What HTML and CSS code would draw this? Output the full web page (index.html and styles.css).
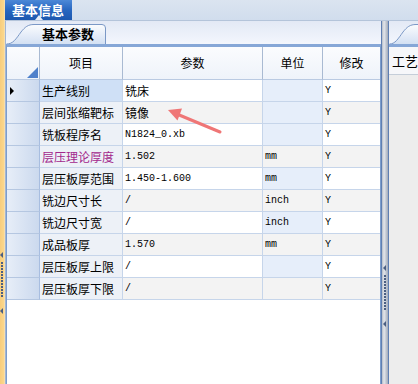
FILE: index.html
```html
<!DOCTYPE html>
<html lang="zh">
<head>
  <meta charset="UTF-8" />
  <title>基本信息</title>
  <link rel="stylesheet" href="styles.css">
</head>
<body>
  <div class="app">
    <div class="edge-left">
      <div class="grip">
        <span class="tri"></span>
        <span class="dots"></span>
        <span class="tri"></span>
      </div>
    </div>

    <div class="main">
      <div class="topbar">
        <div class="toptab">基本信息</div>
      </div>

      <div class="work">
        <div class="pane">
          <div class="tabstrip">
            <div class="tab">
              <svg class="tab-shape" width="100" height="23" viewBox="0 0 100 23">
                <defs>
                  <linearGradient id="tabFill" x1="0" y1="0" x2="0" y2="1">
                    <stop offset="0" stop-color="#fbfcfe" />
                    <stop offset="1" stop-color="#d3e0f3" />
                  </linearGradient>
                </defs>
                <path d="M0.5,23 C7,23 10,18 15,11 C19,6 22,3.5 28,3.5 L96,3.5 Q99.5,3.5 99.5,7 L99.5,23" fill="url(#tabFill)" stroke="#7b98c6" />
              </svg>
              <span>基本参数</span>
            </div>
          </div>

          <div class="grid">
            <div class="row head">
              <div class="rh corner"><span class="corner-tri"></span></div>
              <div>项目</div>
              <div>参数</div>
              <div>单位</div>
              <div>修改</div>
            </div>
            <div class="row sel">
              <div class="rh"><span class="cur"></span></div>
              <div class="name">生产线别</div>
              <div class="val">铣床</div>
              <div class="unit"></div>
              <div class="mod m">Y</div>
            </div>
            <div class="row alt">
              <div class="rh"></div>
              <div class="name">层间张缩靶标</div>
              <div class="val">镜像</div>
              <div class="unit ro"></div>
              <div class="mod m">Y</div>
            </div>
            <div class="row">
              <div class="rh"></div>
              <div class="name">铣板程序名</div>
              <div class="val m">N1824_0.xb</div>
              <div class="unit"></div>
              <div class="mod m">Y</div>
            </div>
            <div class="row alt">
              <div class="rh"></div>
              <div class="name hl">层压理论厚度</div>
              <div class="val m">1.502</div>
              <div class="unit m">mm</div>
              <div class="mod m">Y</div>
            </div>
            <div class="row">
              <div class="rh"></div>
              <div class="name">层压板厚范围</div>
              <div class="val m">1.450-1.600</div>
              <div class="unit m">mm</div>
              <div class="mod m">Y</div>
            </div>
            <div class="row alt">
              <div class="rh"></div>
              <div class="name">铣边尺寸长</div>
              <div class="val m">/</div>
              <div class="unit m">inch</div>
              <div class="mod m">Y</div>
            </div>
            <div class="row">
              <div class="rh"></div>
              <div class="name">铣边尺寸宽</div>
              <div class="val m">/</div>
              <div class="unit m">inch</div>
              <div class="mod m">Y</div>
            </div>
            <div class="row alt">
              <div class="rh"></div>
              <div class="name">成品板厚</div>
              <div class="val m">1.570</div>
              <div class="unit m">mm</div>
              <div class="mod m">Y</div>
            </div>
            <div class="row">
              <div class="rh"></div>
              <div class="name">层压板厚上限</div>
              <div class="val m">/</div>
              <div class="unit"></div>
              <div class="mod m">Y</div>
            </div>
            <div class="row alt">
              <div class="rh"></div>
              <div class="name">层压板厚下限</div>
              <div class="val m">/</div>
              <div class="unit"></div>
              <div class="mod m">Y</div>
            </div>
          </div>
        </div>

        <div class="splitter">
          <div class="grip">
            <span class="tri"></span>
            <span class="dots"></span>
            <span class="tri"></span>
          </div>
        </div>

        <div class="side">
          <div class="side-strip">
            <svg class="tab-shape" width="29" height="23" viewBox="0 0 29 23">
              <defs>
                <linearGradient id="tabFill2" x1="0" y1="0" x2="0" y2="1">
                  <stop offset="0" stop-color="#fbfcfe" />
                  <stop offset="1" stop-color="#d3e0f3" />
                </linearGradient>
              </defs>
              <path d="M0.5,23 C6,23 9,18 14,11 C18,6 21,3.5 27,3.5 L30,3.5 L30,23" fill="url(#tabFill2)" stroke="#7b98c6" />
            </svg>
          </div>
          <div class="side-head">工艺参数</div>
        </div>
      </div>
    </div>

    <!-- 标注箭头 -->
    <svg class="mark" width="418" height="384" viewBox="0 0 418 384">
      <line x1="220" y1="132" x2="178" y2="114.5" stroke="#ef7676" stroke-width="3" stroke-linecap="round" />
      <polygon points="168,110 182,108.5 177.5,120.5" fill="#ef7676" />
    </svg>
  </div>
</body>
</html>
```

FILE: styles.css
```css
* {
  box-sizing: border-box;
}
body {
  margin: 0;
  width: 418px;
  height: 384px;
  overflow: hidden;
  font-family: "Noto Sans CJK SC", sans-serif;
  font-size: 12px;
  color: #000;
  background: #fff;
}
.app {
  position: relative;
  display: flex;
  height: 384px;
}
.edge-left {
  width: 5px;
  flex-shrink: 0;
  background: linear-gradient(to right, #f7cd7c, #fbd68a 70%, #f6e3bb);
  padding-top: 252px;
}
.grip {
  display: flex;
  flex-direction: column;
  align-items: flex-start;
}
.grip .tri {
  width: 0;
  height: 0;
  border-top: 3px solid transparent;
  border-bottom: 3px solid transparent;
  border-right: 3px solid #4b5f82;
}
.grip .dots {
  width: 2px;
  height: 36px;
  margin: 4px 0 10px 1px;
  background: repeating-linear-gradient(#4b5f82 0 2px, transparent 2px 3px);
}

.main {
  flex: 1;
  display: flex;
  flex-direction: column;
}
.topbar {
  height: 21px;
  flex-shrink: 0;
  background: linear-gradient(#dbe4f0, #d1dded);
  border-bottom: 1px solid #b4c4da;
}
.toptab {
  position: relative;
  width: 67px;
  height: 20px;
  padding-left: 7px;
  background: linear-gradient(#4c88d7, #2766c0 50%, #1c57af);
  color: #fff;
  font-weight: bold;
  font-size: 13px;
  line-height: 19px;
}
.toptab::after {
  content: "";
  position: absolute;
  left: 30px;
  bottom: 0;
  border-left: 4px solid transparent;
  border-right: 4px solid transparent;
  border-bottom: 5px solid #e6ecf7;
}

.work {
  flex: 1;
  display: flex;
  min-height: 0;
}
.pane {
  width: 376px;
  flex-shrink: 0;
  border-left: 1px solid #a3b6d3;
  display: flex;
  flex-direction: column;
}
.tabstrip {
  height: 23px;
  flex-shrink: 0;
  background: linear-gradient(#e3e9f5, #f3f6fd);
}
.tab {
  position: relative;
  width: 100px;
  height: 23px;
  padding: 3px 0 0 36px;
  font-weight: bold;
  font-size: 13px;
  line-height: 20px;
}
.tab-shape {
  position: absolute;
  left: 0;
  top: 0;
}
.tab span {
  position: relative;
}

.grid {
  flex: 1;
  background: #fff;
  border-left: 1px solid #7c9dcc;
  border-right: 1px solid #7c9dcc;
  border-top: 3px solid #86a7d7;
}
.row {
  display: grid;
  grid-template-columns: 33px 83px 140px 60px 57px;
  height: 22px;
}
.row > div {
  border-right: 1px solid #c6d5ea;
  border-bottom: 1px solid #c6d5ea;
  padding-left: 2px;
  line-height: 21px;
  white-space: nowrap;
  overflow: hidden;
}
.row > div:last-child {
  border-right: none;
}
.row.head {
  height: 33px;
}
.row.head > div {
  text-align: center;
  padding-left: 0;
  line-height: 32px;
  background: linear-gradient(#fbfcfe, #eef3fa);
  border-right-color: #a9bad2;
  border-bottom-color: #b9cae2;
}
.row > .rh {
  display: flex;
  align-items: center;
  padding-left: 3px;
  background: linear-gradient(to right, #e7eef8, #cbd9ee);
  border-right-color: #a7bde0;
  border-bottom-color: #b5c7e1;
}
.row.head > .corner {
  align-items: flex-end;
  justify-content: flex-end;
  padding: 0 1px 1px 0;
  background: linear-gradient(#fbfcfe, #eef3fa);
}
.corner-tri {
  width: 0;
  height: 0;
  border-left: 11px solid transparent;
  border-bottom: 11px solid #4f81cb;
}
.cur {
  width: 0;
  height: 0;
  border-top: 4px solid transparent;
  border-bottom: 4px solid transparent;
  border-left: 4px solid #000;
}
.name {
  background: #edf1f7;
}
.row.sel .name {
  background: #cfe0f6;
}
.name.hl {
  color: #a3288c;
}
.val, .mod {
  background: #fff;
}
.unit {
  background: #e6eefa;
}
.row.alt .val,
.row.alt .mod,
.row.alt .unit {
  background: #f3f3f3;
}
.row.alt .unit.ro {
  background: #e6eefa;
}
.m {
  font-family: "Liberation Mono", monospace;
  font-size: 10px;
}

.splitter {
  width: 8px;
  flex-shrink: 0;
  border-left: 1px solid #5f7fb2;
  border-right: 1px solid #5f7fb2;
  background: linear-gradient(to right, #b3bcc8, #e3e6eb 35%, #a0aaba);
  padding: 244px 0 0 1px;
}

.side {
  flex: 1;
  display: flex;
  flex-direction: column;
  background: #ededed;
  overflow: hidden;
}
.side-strip {
  position: relative;
  height: 23px;
  flex-shrink: 0;
  background: linear-gradient(#e3e9f5, #f3f6fd);
}
.side-head {
  height: 31px;
  border-top: 3px solid #86a7d7;
  border-bottom: 1px solid #c5ced9;
  background: #f6f7fa;
  padding-left: 3px;
  font-size: 13px;
  line-height: 27px;
  white-space: nowrap;
}

.mark {
  position: absolute;
  left: 0;
  top: 0;
  pointer-events: none;
}
```
